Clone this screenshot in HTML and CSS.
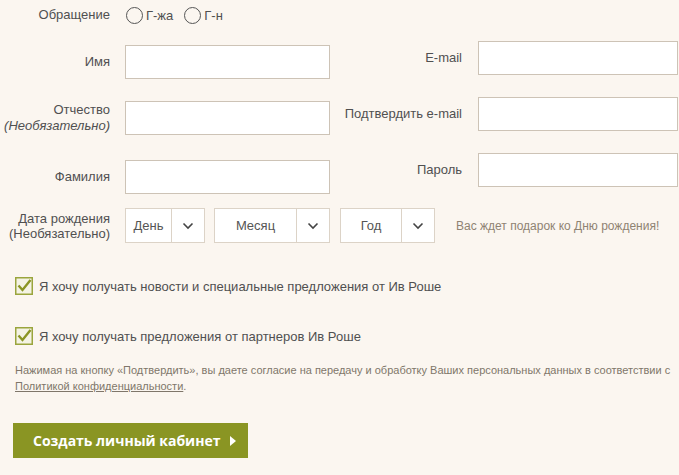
FILE: index.html
```html
<!DOCTYPE html>
<html lang="ru">
     <head>
          <meta charset="UTF-8" />
          <meta name="viewport" content="width=device-width, initial-scale=1.0" />
          <title>Регистрация</title>
          <link rel="stylesheet" href="styles.css">
     </head>
     <body>
          <form class="reg">
               <div class="top">
                    <div class="col col-left">
                         <div class="row row-salut">
                              <span class="lbl">Обращение</span>
                              <div class="radios">
                                   <label class="radio"><span class="circle"></span>Г-жа</label>
                                   <label class="radio"><span class="circle"></span>Г-н</label>
                              </div>
                         </div>
                         <div class="row row-first">
                              <label class="lbl">Имя</label>
                              <input class="inp" type="text" />
                         </div>
                         <div class="row row-middle">
                              <label class="lbl">Отчество<br /><i>(Необязательно)</i></label>
                              <input class="inp" type="text" />
                         </div>
                         <div class="row row-last">
                              <label class="lbl">Фамилия</label>
                              <input class="inp" type="text" />
                         </div>
                    </div>
                    <div class="col col-right">
                         <div class="row">
                              <label class="lbl lbl-right">E-mail</label>
                              <input class="inp inp-right" type="text" />
                         </div>
                         <div class="row">
                              <label class="lbl lbl-right">Подтвердить e-mail</label>
                              <input class="inp inp-right" type="text" />
                         </div>
                         <div class="row">
                              <label class="lbl lbl-right">Пароль</label>
                              <input class="inp inp-right" type="password" />
                         </div>
                    </div>
               </div>

               <div class="row row-date">
                    <label class="lbl lbl-date">Дата рождения<br />(Необязательно)</label>
                    <div class="sel sel-day">
                         <span class="sel-text">День</span>
                         <span class="sel-arrow"><svg width="12" height="8" viewBox="0 0 12 8"><path d="M1.5 1.5 L6 6 L10.5 1.5" fill="none" stroke="#444" stroke-width="1.6"/></svg></span>
                    </div>
                    <div class="sel sel-month">
                         <span class="sel-text">Месяц</span>
                         <span class="sel-arrow"><svg width="12" height="8" viewBox="0 0 12 8"><path d="M1.5 1.5 L6 6 L10.5 1.5" fill="none" stroke="#444" stroke-width="1.6"/></svg></span>
                    </div>
                    <div class="sel sel-year">
                         <span class="sel-text">Год</span>
                         <span class="sel-arrow"><svg width="12" height="8" viewBox="0 0 12 8"><path d="M1.5 1.5 L6 6 L10.5 1.5" fill="none" stroke="#444" stroke-width="1.6"/></svg></span>
                    </div>
                    <span class="gift">Вас ждет подарок ко Дню рождения!</span>
               </div>

               <label class="check check-news">
                    <svg class="box" width="18" height="18" viewBox="0 0 18 18">
                         <rect x="0.75" y="0.75" width="16.5" height="16.5" fill="#f4f3e4" stroke="#9aa53d" stroke-width="1.5"/>
                         <path d="M3.5 8.5 L7.5 13 L15.5 3" fill="none" stroke="#8a9523" stroke-width="2.4"/>
                    </svg>
                    Я хочу получать новости и специальные предложения от Ив Роше
               </label>
               <label class="check check-partners">
                    <svg class="box" width="18" height="18" viewBox="0 0 18 18">
                         <rect x="0.75" y="0.75" width="16.5" height="16.5" fill="#f4f3e4" stroke="#9aa53d" stroke-width="1.5"/>
                         <path d="M3.5 8.5 L7.5 13 L15.5 3" fill="none" stroke="#8a9523" stroke-width="2.4"/>
                    </svg>
                    Я хочу получать предложения от партнеров Ив Роше
               </label>

               <p class="note">
                    Нажимая на кнопку «Подтвердить», вы даете согласие на передачу и обработку Ваших персональных данных в соответствии с
                    <a href="#">Политикой конфиденциальности</a>.
               </p>

               <button class="btn" type="button">Создать личный кабинет <span class="tri"></span></button>
          </form>
     </body>
</html>
```

FILE: styles.css
```css
* {
     padding: 0;
     margin: 0;
     box-sizing: border-box;
}
body {
     background-color: #fbf6f0;
     font-family: "Liberation Sans", Arial, sans-serif;
     font-size: 13px;
     color: #505050;
}
.reg {
     width: 679px;
}
.top {
     display: flex;
}
.col {
     display: flex;
     flex-direction: column;
}
.col-left {
     width: 330px;
}
.col-right {
     margin-left: 10px;
     padding-top: 41px;
     gap: 22px;
}
.row {
     display: flex;
     align-items: center;
}
.lbl {
     width: 110px;
     text-align: right;
     line-height: 16px;
     margin-right: 15px;
}
.lbl i {
     font-style: italic;
}
.lbl-right {
     width: 122px;
     margin-right: 16px;
}
.inp {
     width: 205px;
     height: 34px;
     border: 1px solid #cdc3b6;
     background-color: #fff;
     outline: none;
}
.inp-right {
     width: 200px;
}
.row-salut {
     height: 30px;
}
.radios {
     display: flex;
     gap: 11px;
     margin-left: 1px;
}
.radio {
     display: flex;
     align-items: center;
}
.circle {
     width: 17px;
     height: 17px;
     border: 1px solid #555;
     border-radius: 50%;
     margin-right: 3px;
}
.row-first {
     margin-top: 15px;
}
.row-middle {
     margin-top: 22px;
}
.row-last {
     margin-top: 25px;
}

/* birthday */
.row-date {
     margin-top: 14px;
     height: 35px;
}
.lbl-date {
     line-height: 15px;
}
.sel {
     display: flex;
     height: 35px;
     border: 1px solid #dcd3c7;
     background-color: #fff;
     margin-right: 9px;
}
.sel-text {
     flex: 1;
     display: flex;
     align-items: center;
     justify-content: center;
     color: #555;
}
.sel-arrow {
     width: 33px;
     border-left: 1px solid #dcd3c7;
     display: flex;
     align-items: center;
     justify-content: center;
}
.sel-day {
     width: 80px;
}
.sel-month {
     width: 116px;
     margin-right: 10px;
}
.sel-year {
     width: 95px;
     margin-right: 21px;
}
.gift {
     font-size: 12px;
     color: #8f8373;
}

/* checkboxes */
.check {
     display: flex;
     align-items: center;
     margin-left: 15px;
     height: 18px;
}
.check .box {
     margin-right: 6px;
}
.check-news {
     margin-top: 34px;
}
.check-partners {
     margin-top: 32px;
}
.note {
     margin: 17px 0 0 15px;
     font-size: 11px;
     line-height: 16px;
     color: #7f766a;
}
.note a {
     color: #7f766a;
}
.btn {
     margin: 29px 0 0 13px;
     width: 235px;
     height: 35px;
     border: none;
     background-color: #8a9523;
     color: #fff;
     font-family: "Open Sans", sans-serif;
     font-weight: 700;
     font-size: 14px;
     display: flex;
     align-items: center;
     padding-left: 20px;
}
.tri {
     width: 0;
     height: 0;
     border-top: 5px solid transparent;
     border-bottom: 5px solid transparent;
     border-left: 6px solid #fff;
     margin-left: 10px;
}
```
